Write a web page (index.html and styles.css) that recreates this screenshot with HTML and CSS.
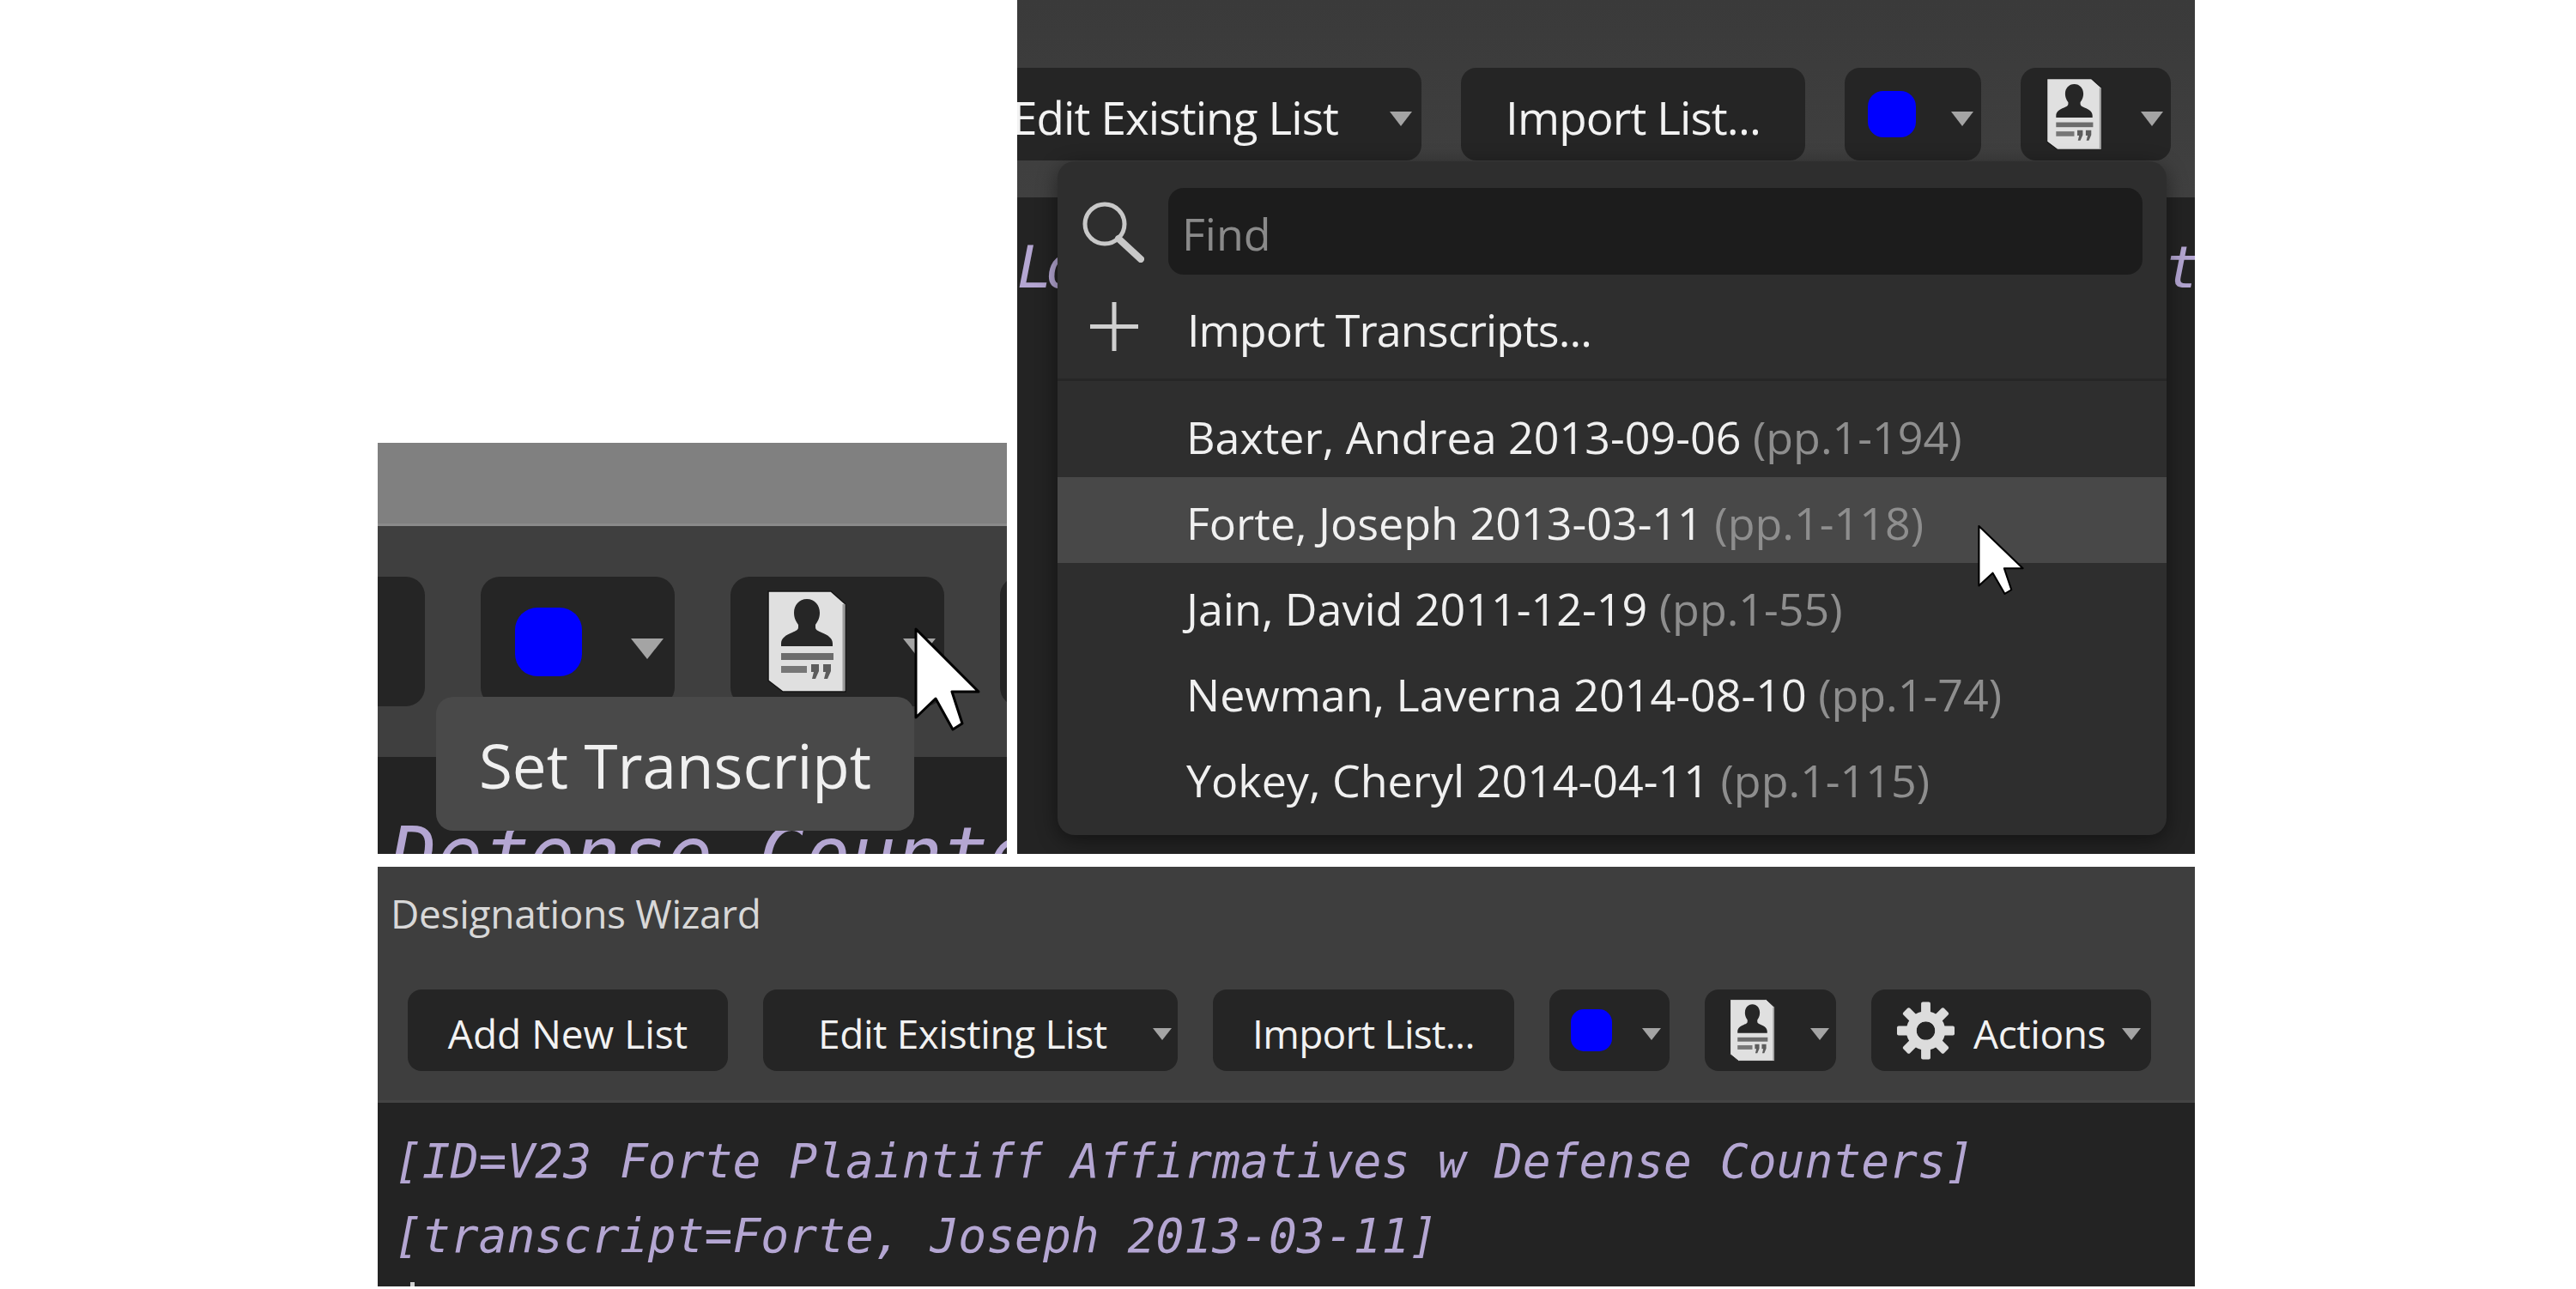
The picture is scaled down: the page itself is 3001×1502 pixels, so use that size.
FILE: index.html
```html
<!DOCTYPE html>
<html lang="en">
<head>
<meta charset="utf-8">
<title>Designations Wizard</title>
<link rel="stylesheet" href="styles.css">
</head>
<body>
<svg class="defs" aria-hidden="true">
  <symbol id="ico-person" viewBox="0 0 92 119" preserveAspectRatio="none">
    <path d="M1 1H74L91 16V118H18L1 105Z" fill="#e0e0e0" stroke="#141414" stroke-width="1.500"/>
    <path d="M89 16V117" stroke="#9c9c9c" stroke-width="3"/>
    <path d="M46 10c-9 0-15 7-15 16 0 7 3 11 5 14v3c0 3-3 4-7 6-8 3-13 7-13 13v3h60v-3c0-6-5-10-13-13-4-2-7-3-7-6v-3c2-3 5-7 5-14 0-9-6-16-15-16Z" fill="#262626"/>
    <rect x="16" y="73" width="61" height="8" fill="#6c6c6c"/>
    <rect x="16" y="88" width="30" height="8" fill="#777"/>
    <path d="M51 86h9v8l-4 9h-4l2-8h-3ZM65 86h9v8l-4 9h-4l2-8h-3Z" fill="#5c5c5c"/>
  </symbol>
  <symbol id="ico-cursor" viewBox="0 0 77 123" preserveAspectRatio="none">
    <path d="M2 3V106L25 84L45 120L56 113L44 76H75Z" fill="#fff" stroke="#000" stroke-width="3" stroke-linejoin="round"/>
  </symbol>
  <symbol id="ico-gear" viewBox="0 0 70 70">
    <g fill="#dcdcdc">
      <rect x="29.500" y="1" width="11" height="68" rx="2"/>
      <rect x="29.500" y="1" width="11" height="68" rx="2" transform="rotate(45 35 35)"/>
      <rect x="29.500" y="1" width="11" height="68" rx="2" transform="rotate(90 35 35)"/>
      <rect x="29.500" y="1" width="11" height="68" rx="2" transform="rotate(135 35 35)"/>
    </g>
    <circle cx="35" cy="35" r="11" fill="#252525"/>
    <circle cx="35" cy="35" r="17" fill="none" stroke="#dcdcdc" stroke-width="12"/>
  </symbol>
</svg>

<main class="canvas">

  <section class="panel panel-a">
    <div class="title-band"></div>
    <div class="toolbar">
      <div class="btn btn-stub"></div>
      <div class="btn btn-color">
        <span class="swatch"></span><span class="arrow"></span>
      </div>
      <div class="btn btn-person">
        <svg class="person"><use href="#ico-person"/></svg><span class="arrow"></span>
      </div>
      <div class="btn btn-stub"></div>
    </div>
    <div class="editor"><span>Defense Counters</span></div>
    <div class="tooltip">Set Transcript</div>
    <svg class="cursor"><use href="#ico-cursor"/></svg>
  </section>

  <section class="panel panel-b">
    <div class="toolbar">
      <div class="btn btn-edit"><span>Edit Existing List</span><span class="arrow"></span></div>
      <div class="btn btn-import"><span>Import List...</span></div>
      <div class="btn btn-color"><span class="swatch"></span><span class="arrow"></span></div>
      <div class="btn btn-person"><svg class="person"><use href="#ico-person"/></svg><span class="arrow"></span></div>
    </div>
    <div class="editor"><span class="frag-start">Lo</span><span class="frag-end">t</span></div>
    <div class="menu">
      <div class="menu-row menu-search">
        <svg class="menu-icon mag" viewBox="0 0 74 72"><circle cx="28" cy="27" r="23" fill="none" stroke="#c8c8c8" stroke-width="5"/><path d="M44 44L70 68" stroke="#c8c8c8" stroke-width="8" stroke-linecap="round"/></svg>
        <div class="find">Find</div>
      </div>
      <div class="menu-row menu-add">
        <svg class="menu-icon plus" viewBox="0 0 56 57"><path d="M0 28.500H56M28 0V57" stroke="#cfcfcf" stroke-width="5"/></svg>
        <span>Import Transcripts...</span>
      </div>
      <ul class="list">
        <li class="item">Baxter, Andrea 2013-09-06 <span class="pages">(pp.1-194)</span></li>
        <li class="item item-hover">Forte, Joseph 2013-03-11 <span class="pages">(pp.1-118)</span></li>
        <li class="item">Jain, David 2011-12-19 <span class="pages">(pp.1-55)</span></li>
        <li class="item">Newman, Laverna 2014-08-10 <span class="pages">(pp.1-74)</span></li>
        <li class="item">Yokey, Cheryl 2014-04-11 <span class="pages">(pp.1-115)</span></li>
      </ul>
    </div>
    <svg class="cursor"><use href="#ico-cursor"/></svg>
  </section>

  <section class="panel panel-c">
    <div class="toolbar-wrap">
      <h1 class="wizard-title">Designations Wizard</h1>
      <div class="toolbar">
        <div class="btn btn-add"><span>Add New List</span></div>
        <div class="btn btn-edit"><span>Edit Existing List</span><span class="arrow"></span></div>
        <div class="btn btn-import"><span>Import List...</span></div>
        <div class="btn btn-color"><span class="swatch"></span><span class="arrow"></span></div>
        <div class="btn btn-person"><svg class="person"><use href="#ico-person"/></svg><span class="arrow"></span></div>
        <div class="btn btn-actions"><svg class="gear"><use href="#ico-gear"/></svg><span>Actions</span><span class="arrow"></span></div>
      </div>
    </div>
    <div class="editor">
      <div>[ID=V23 Forte Plaintiff Affirmatives w Defense Counters]</div>
      <div>[transcript=Forte, Joseph 2013-03-11]</div>
    </div>
    <span class="next-line-mark"></span>
  </section>

</main>
</body>
</html>
```

FILE: styles.css
```css
* { box-sizing: border-box; }
html, body { margin: 0; padding: 0; background: #fff; }
body { font-family: "Open Sans", "Noto Sans", sans-serif; color: #f2f2f2; }
.defs { position: absolute; width: 0; height: 0; }
.canvas { position: relative; width: 3001px; height: 1502px; overflow: hidden; }

/* free canvas: three screenshots pasted on a white page */
.panel { position: absolute; overflow: hidden; background: #3f3f3f; }
.panel-a { left: 440px; top: 516px; width: 733px; height: 479px; }
.panel-b { left: 1185px; top: 0; width: 1372px; height: 995px; }
.panel-c { left: 440px; top: 1010px; width: 2117px; height: 489px; }

.toolbar { display: flex; align-items: flex-start; flex-shrink: 0; }
.btn { display: flex; align-items: center; flex-shrink: 0; background: #252525; white-space: nowrap; }
.btn > span:not(.arrow):not(.swatch) { position: relative; top: 3px; }
.swatch { display: block; flex-shrink: 0; background: #0000ff; }
.person, .gear, .cursor { display: block; flex-shrink: 0; }
.arrow { display: block; flex-shrink: 0; width: 0; height: 0; border-style: solid; border-color: #a4a4a4 transparent transparent; }
.editor { font-family: "DejaVu Sans Mono", "Liberation Mono", monospace; font-style: italic; color: #b4a6d2; background: #232323; white-space: nowrap; overflow: hidden; }

/* Panel A */
.title-band { height: 97px; background: #808080; border-bottom: 3px solid #8a8a8a; }
.panel-a .toolbar { height: 269px; padding-top: 59px; gap: 65px; margin-left: -60px; background: #3f3f3f; }
.panel-a .btn { height: 151px; border-radius: 22px; }
.panel-a .btn-stub { width: 115px; }
.panel-a .btn-color { width: 226px; padding-left: 40px; }
.panel-a .swatch { width: 78px; height: 80px; border-radius: 26px; }
.panel-a .arrow { margin-left: 57px; margin-top: 16px; border-width: 24px 19px 0; }
.panel-a .btn-person { width: 249px; padding-left: 43px; }
.panel-a .person { width: 92px; height: 119px; }
.panel-a .btn-person .arrow { margin-left: 66px; }
.panel-a .editor { height: 113px; padding: 64px 0 0 15px; font-size: 89px; line-height: 100px; }
.tooltip { position: absolute; left: 68px; top: 296px; width: 557px; height: 156px; display: flex; align-items: center; justify-content: center; padding-top: 2px; background: #494949; border-radius: 20px; font-size: 71px; color: #f0f0f0; }
.panel-a .cursor { position: absolute; left: 625px; top: 214px; width: 77px; height: 123px; }

/* Panel B */
.panel-b .toolbar { height: 230px; padding: 79px 28px 0 0; gap: 46px; justify-content: flex-end; background: linear-gradient(#3a3a3a, #404040); font-size: 53px; letter-spacing: -0.9px; }
.panel-b .btn { height: 108px; border-radius: 18px; }
.panel-b .arrow { margin-top: 11px; border-width: 17px 13px 0; }
.panel-b .btn-edit { width: 520px; padding-left: 43px; }
.panel-b .btn-edit span:first-child { width: 440px; }
.panel-b .btn-import { width: 401px; justify-content: center; }
.panel-b .btn-color { width: 159px; padding-left: 27px; }
.panel-b .swatch { width: 56px; height: 54px; border-radius: 18px; }
.panel-b .btn-color .arrow { margin-left: 41px; }
.panel-b .btn-person { width: 175px; padding-left: 30px; }
.panel-b .person { width: 65px; height: 84px; }
.panel-b .btn-person .arrow { margin-left: 45px; }
.panel-b .editor { display: flex; justify-content: space-between; height: 765px; padding: 42px 0 0 0; font-size: 68px; line-height: 80px; }
.frag-start { letter-spacing: -8px; }
.frag-end { margin-right: -6px; }

.menu { position: absolute; left: 47px; top: 188px; width: 1292px; height: 785px; overflow: hidden; background: #2e2e2e; border-radius: 20px; box-shadow: 0 6px 24px rgba(0, 0, 0, 0.45); font-size: 52px; }
.menu-row { display: flex; align-items: center; }
.menu-search { height: 132px; padding: 31px 28px 0 27px; }
.mag { width: 74px; height: 72px; margin-right: 28px; }
.find { flex: 1; height: 101px; padding: 3px 16px 0; display: flex; align-items: center; background: #1c1c1c; border-radius: 18px; color: #8a8a8a; }
.menu-add { height: 124px; padding: 0 0 0 38px; border-bottom: 3px solid #262626; color: #f0f0f0; letter-spacing: -0.9px; }
.menu-add span { position: relative; top: 3px; }
.plus { width: 56px; height: 57px; margin-right: 57px; }
.list { list-style: none; margin: 0; padding: 12px 0 0; }
.item { height: 100px; display: flex; align-items: center; padding-left: 150px; padding-top: 4px; color: #f0f0f0; white-space: pre; }
.item-hover { background: #484848; }
.pages { color: #8e8e8e; }
.panel-b .cursor { position: absolute; left: 1119px; top: 611px; width: 54px; height: 83px; }

/* Panel C */
.toolbar-wrap { height: 275px; background: #3e3e3e; border-bottom: 3px solid #444; }
.wizard-title { margin: 0; height: 143px; padding: 23px 0 0 15px; font-size: 46px; font-weight: 400; color: #d8d8d8; letter-spacing: -0.3px; }
.panel-c .toolbar { gap: 41px; padding-left: 35px; font-size: 46px; letter-spacing: -0.4px; }
.panel-c .btn { height: 95px; border-radius: 16px; }
.panel-c .arrow { margin-top: 9px; border-width: 14px 11px 0; }
.panel-c .btn-add { width: 373px; justify-content: center; letter-spacing: 0; }
.panel-c .btn-edit { width: 483px; padding-left: 64px; }
.panel-c .btn-edit span:first-child { width: 390px; }
.panel-c .btn-import { width: 351px; justify-content: center; letter-spacing: -0.7px; }
.panel-c .btn-color { width: 140px; padding-left: 25px; }
.panel-c .swatch { width: 48px; height: 49px; border-radius: 15px; }
.panel-c .btn-color .arrow { margin-left: 35px; }
.panel-c .btn-person { width: 153px; padding-left: 29px; }
.panel-c .person { width: 53px; height: 73px; }
.panel-c .btn-person .arrow { margin-left: 41px; }
.panel-c .btn-actions { width: 326px; padding-left: 29px; }
.panel-c .gear { width: 69px; height: 70px; margin-right: 21px; }
.panel-c .btn-actions .arrow { margin-left: 19px; }
.panel-c .editor { height: 214px; padding: 25px 0 0 19px; font-size: 54.600px; line-height: 87px; }
.next-line-mark { position: absolute; left: 38px; bottom: 0; width: 5px; height: 5px; background: #d0d0d0; }
```
